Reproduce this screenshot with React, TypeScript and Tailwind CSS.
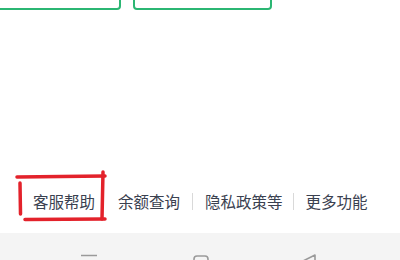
import React from "react";

const font = { fontFamily: '"Noto Sans CJK SC", "Noto Sans", sans-serif' };

export default function App() {
  return (
    <div className="relative w-[400px] h-[260px] bg-white overflow-hidden flex flex-col" style={font}>
      {/* top buttons (cut off) */}
      <div className="flex h-[10px] shrink-0">
        <div className="ml-[-10px] w-[131px] h-[40px] mt-[-30px] border-2 border-[#2bb673] rounded-[4px]" />
        <div className="ml-[12px] w-[139px] h-[40px] mt-[-30px] border-2 border-[#2bb673] rounded-[4px]" />
      </div>

      {/* link row */}
      <div className="mt-[177px] h-[28px] flex items-center text-[15.5px] text-[#3a4150] leading-[28px] shrink-0">
        <span className="ml-[33px]">客服帮助</span>
        <span className="ml-[23px]">余额查询</span>
        <span className="ml-[12px] w-px h-[17px] bg-[#d9d9d9]" />
        <span className="ml-[12px]">隐私政策等</span>
        <span className="ml-[10px] w-px h-[17px] bg-[#d9d9d9]" />
        <span className="ml-[12px]">更多功能</span>
      </div>

      {/* nav bar */}
      <div className="mt-auto h-[27px] bg-[#f4f4f4] flex shrink-0 overflow-hidden">
        <div className="ml-[80px] mt-[21px]">
          <svg width="18" height="10" viewBox="0 0 18 10">
            <path d="M1 1.5 H17 M1 7 H17" stroke="#9a9a9a" strokeWidth="1.6" fill="none" />
          </svg>
        </div>
        <div className="ml-[95px] mt-[22px]">
          <svg width="18" height="18" viewBox="0 0 18 18">
            <rect x="1" y="1" width="14" height="14" rx="3" stroke="#9a9a9a" strokeWidth="1.6" fill="none" />
          </svg>
        </div>
        <div className="ml-[88px] mt-[21px]">
          <svg width="20" height="20" viewBox="0 0 20 20">
            <path d="M16 1 L16 15 L2 8 Z" stroke="#9a9a9a" strokeWidth="1.6" strokeLinejoin="round" fill="none" />
          </svg>
        </div>
      </div>

      {/* red annotation */}
      <svg className="absolute left-0 top-0 pointer-events-none" width="400" height="260" viewBox="0 0 400 260">
        <g stroke="#e3222b" strokeWidth="3.5" strokeLinecap="round" fill="none">
          <path d="M17 177 L105 176" />
          <path d="M103 172 L102 219" />
          <path d="M20 183 L20.5 214" />
          <path d="M25 219.5 L105 219" />
        </g>
      </svg>
    </div>
  );
}
